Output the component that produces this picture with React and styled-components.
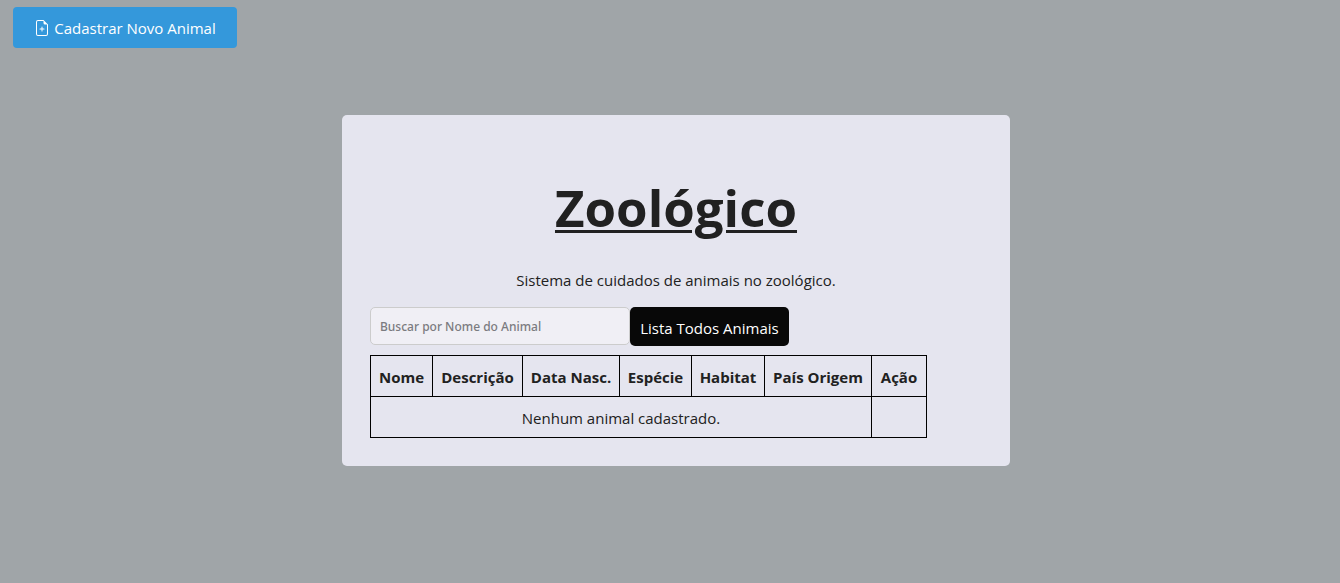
import React from "react";
import styled, { createGlobalStyle } from "styled-components";
import { BsFileEarmarkPlus } from "react-icons/bs";

const GlobalStyle = createGlobalStyle`
  *, *::before, *::after { box-sizing: border-box; }
  body {
    margin: 0;
    background: #a0a5a8;
    color: #212121;
    font-family: "Segoe UI", "Open Sans", "Noto Sans", sans-serif;
    font-size: 15px;
    line-height: 24px;
  }
`;

const Page = styled.div`
  padding: 7px 1px 16px 13px;
`;

const PrimaryButton = styled.button`
  display: flex;
  align-items: center;
  justify-content: center;
  gap: 4px;
  width: 224px;
  height: 41px;
  padding: 0;
  border: 0;
  border-radius: 4px;
  background: #3498db;
  color: #fff;
  font: inherit;
  white-space: nowrap;
  cursor: pointer;
`;

const Card = styled.main`
  width: 100%;
  max-width: 668px;
  margin: 67px auto 0;
  padding: 54px 28px 28px;
  border-radius: 5px;
  background: #e5e5ef;
`;

const Title = styled.h1`
  margin: 0;
  font-size: 51px;
  line-height: 76px;
  font-weight: 700;
  text-align: center;
  text-decoration: underline;
  text-decoration-thickness: 3px;
  text-underline-offset: 3px;
`;

const Subtitle = styled.p`
  margin: 23px 0 15px;
  text-align: center;
`;

const Toolbar = styled.form`
  display: flex;
  align-items: flex-start;
  margin-bottom: 9px;
`;

const SearchInput = styled.input`
  width: 260px;
  height: 38px;
  padding: 0 9px;
  border: 1px solid #ccc;
  border-radius: 5px;
  background: #f0eff5;
  color: #212121;
  font-family: "Noto Sans", sans-serif;
  font-size: 12px;
  font-weight: 500;

  &::placeholder {
    color: #7b7b80;
    opacity: 1;
  }
`;

const ListButton = styled.button`
  width: 159px;
  height: 39px;
  padding: 3px 0 0;
  border: 0;
  border-radius: 5px;
  background: #080808;
  color: #fff;
  font: inherit;
  white-space: nowrap;
  cursor: pointer;
`;

const Table = styled.table`
  width: 557px;
  table-layout: fixed;
  border-collapse: collapse;
`;

const Column = styled.col`
  width: ${({ $width }) => $width}px;
`;

const HeaderCell = styled.th`
  height: 41px;
  padding: 2px 0 0;
  border: 1px solid #000;
  text-align: center;
  white-space: nowrap;
`;

const Cell = styled.td`
  height: 41px;
  padding: 2px 0 0;
  border: 1px solid #000;
  text-align: center;
`;

const columns = [
  { label: "Nome", width: 62 },
  { label: "Descrição", width: 90 },
  { label: "Data Nasc.", width: 97 },
  { label: "Espécie", width: 72 },
  { label: "Habitat", width: 73 },
  { label: "País Origem", width: 107 },
  { label: "Ação", width: 55 },
];

export default function App() {
  return (
    <>
      <GlobalStyle />
      <Page>
        <PrimaryButton type="button">
          <BsFileEarmarkPlus size={16} aria-hidden="true" />
          Cadastrar Novo Animal
        </PrimaryButton>
        <Card>
          <Title>Zoológico</Title>
          <Subtitle>Sistema de cuidados de animais no zoológico.</Subtitle>
          <Toolbar onSubmit={(event) => event.preventDefault()}>
            <SearchInput
              type="text"
              aria-label="Buscar por Nome do Animal"
              placeholder="Buscar por Nome do Animal"
            />
            <ListButton type="button">Lista Todos Animais</ListButton>
          </Toolbar>
          <Table>
            <colgroup>
              {columns.map(({ label, width }) => (
                <Column key={label} $width={width} />
              ))}
            </colgroup>
            <thead>
              <tr>
                {columns.map(({ label }) => (
                  <HeaderCell key={label} scope="col">{label}</HeaderCell>
                ))}
              </tr>
            </thead>
            <tbody>
              <tr>
                <Cell colSpan={6}>Nenhum animal cadastrado.</Cell>
                <Cell />
              </tr>
            </tbody>
          </Table>
        </Card>
      </Page>
    </>
  );
}
